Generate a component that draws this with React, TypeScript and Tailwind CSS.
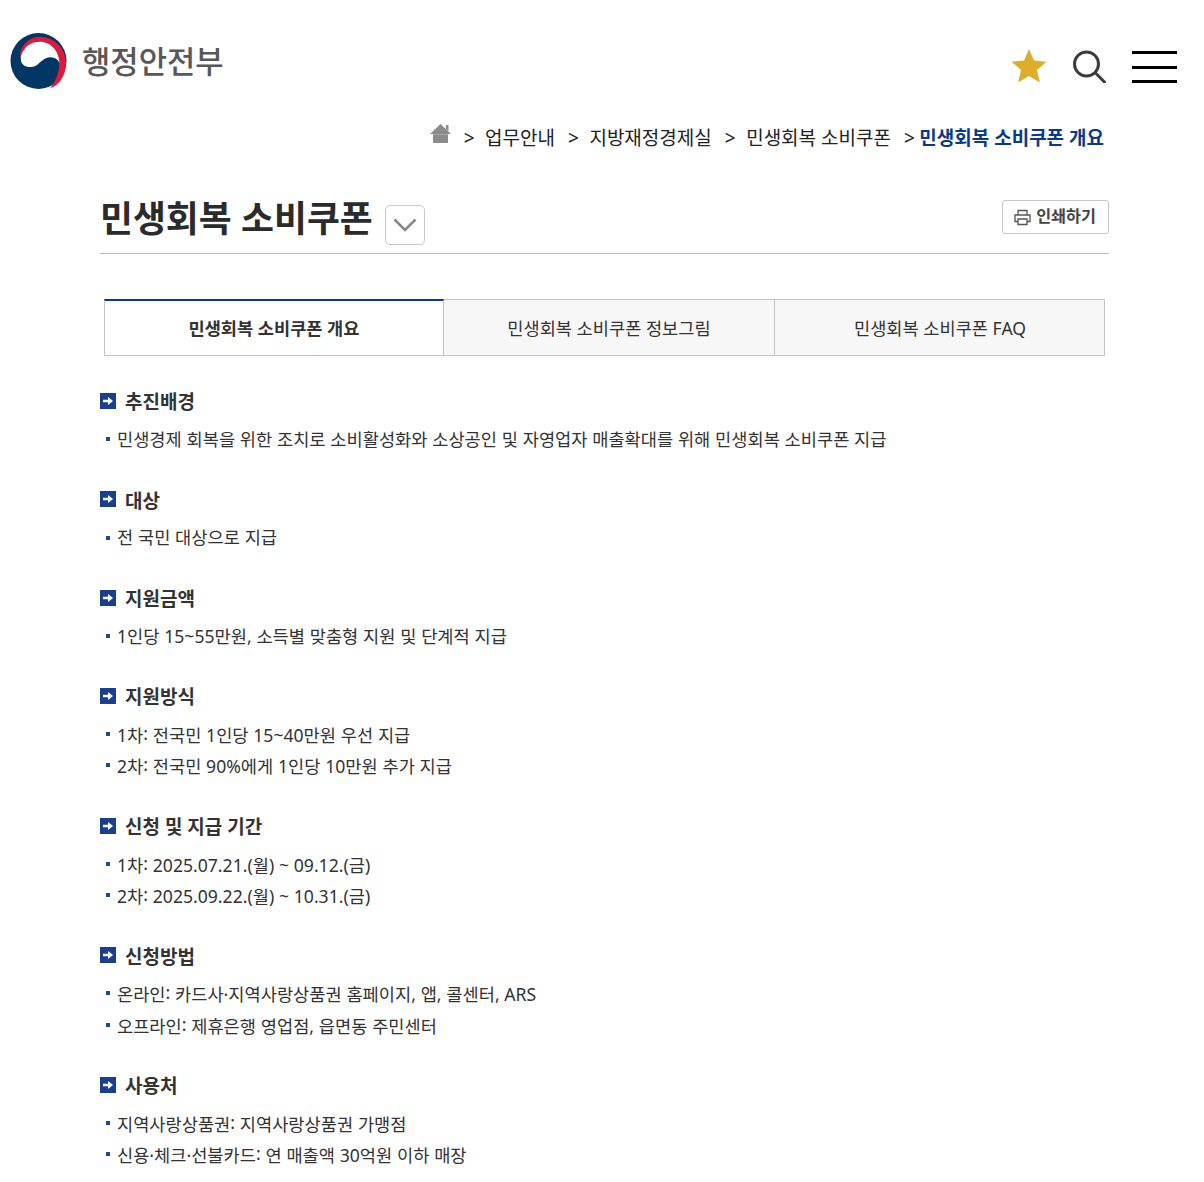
const FONT = '"Noto Sans", "Noto Sans CJK KR", sans-serif';

const sections: { title: string; items: string[] }[] = [
    { title: '추진배경', items: ['민생경제 회복을 위한 조치로 소비활성화와 소상공인 및 자영업자 매출확대를 위해 민생회복 소비쿠폰 지급'] },
    { title: '대상', items: ['전 국민 대상으로 지급'] },
    { title: '지원금액', items: ['1인당 15~55만원, 소득별 맞춤형 지원 및 단계적 지급'] },
    { title: '지원방식', items: ['1차: 전국민 1인당 15~40만원 우선 지급', '2차: 전국민 90%에게 1인당 10만원 추가 지급'] },
    { title: '신청 및 지급 기간', items: ['1차: 2025.07.21.(월) ~ 09.12.(금)', '2차: 2025.09.22.(월) ~ 10.31.(금)'] },
    { title: '신청방법', items: ['온라인: 카드사·지역사랑상품권 홈페이지, 앱, 콜센터, ARS', '오프라인: 제휴은행 영업점, 읍면동 주민센터'] },
    { title: '사용처', items: ['지역사랑상품권: 지역사랑상품권 가맹점', '신용·체크·선불카드: 연 매출액 30억원 이하 매장'] },
];

const crumbs = ['업무안내', '지방재정경제실', '민생회복 소비쿠폰'];

const Logo = () => (
    <svg aria-hidden="true" className="h-[56px] w-[58px]" viewBox="0 0 58 56">
        <circle cx="28.500" cy="28" r="28" fill="#003764" />
        <path d="M10.700 23.700C14 13 21 8.700 30 8.700c11 0 19.300 9.500 19.300 21.500 0 9-4 19-9.300 25.100 9-2.500 16-13 16-25C56 15 44 3.700 30 3.700 20 3.700 12 11 10 20.300Z" fill="#e2173b" />
        <path d="M10.700 23.700C14 13 21 8.700 30 8.700c11 0 19.300 9.500 19.500 22C49 27 44.500 24 40 24.300 34 24.700 31 29 27 32 22 35.500 13 35 11 28Z" fill="#ffffff" />
    </svg>
);

const ArrowBadge = () => (
    <span className="mb-[1px] flex h-[16px] w-[16px] items-center justify-center bg-[#1a3f8f]">
        <svg aria-hidden="true" className="h-[10px] w-[10px]" viewBox="0 0 10 10">
            <path d="M0 3.800h5V1l5 4-5 4V6.200H0Z" fill="#ffffff" />
        </svg>
    </span>
);

// the colon sits higher than the baseline in the original font
const ItemText = ({ text }: { text: string }) => {
    const [head, ...rest] = text.split(':');
    if (rest.length === 0) {
        return <span>{text}</span>;
    }
    return (
        <span>
            {head}
            <span className="align-[2px]">:</span>
            {rest.join(':')}
        </span>
    );
};

export default function App() {
    return (
        <div className="min-h-[1182px] w-[1204px] bg-white text-[#333333]" style={{ fontFamily: FONT }}>
            <header className="flex h-[110px] items-start justify-between pl-[10px] pr-[27px]">
                <div className="mt-[33px] flex items-center gap-[14px]">
                    <Logo />
                    <span className="text-[30.800px] leading-[40px] font-medium text-[#58585a]">행정안전부</span>
                </div>
                <div className="mt-[49px] flex items-start">
                    <svg aria-hidden="true" className="h-[36px] w-[36px]" viewBox="0 0 36 36">
                        <path d="M18 0l5 11.500 12.500 1.200-9.500 8.200 2.900 12.600L18 27 7.100 33.500 10 20.900.5 12.700 13 11.500Z" fill="#dfae28" />
                    </svg>
                    <svg aria-hidden="true" className="ml-[26px] h-[34px] w-[33px]" fill="none" stroke="#3c3c3c" strokeWidth="3" viewBox="0 0 33 34">
                        <circle cx="13.500" cy="15" r="12" />
                        <path d="M22.500 24l9 9" strokeLinecap="round" />
                    </svg>
                    <div className="ml-[26px] mt-[2px] flex h-[32px] w-[45px] flex-col justify-between">
                        <span className="h-[3px] bg-black" />
                        <span className="h-[3px] bg-black" />
                        <span className="h-[3px] bg-black" />
                    </div>
                </div>
            </header>

            <nav className="flex h-[55px] items-start justify-end pr-[100px] text-[19px] leading-[57px] text-[#222222]">
                <svg aria-hidden="true" className="mt-[14px] h-[19px] w-[21px]" fill="#8c8c8c" viewBox="0 0 21 19">
                    <path d="M10.500 0L21 10H0Z" />
                    <path d="M16 1h2.500v6.500L16 5Z" />
                    <path d="M3 10.300h15V18c0 .6-.4 1-1 1H4c-.6 0-1-.4-1-1Z" />
                </svg>
                {crumbs.map((crumb) => (
                    <span key={crumb} className="flex">
                        <span className="ml-[13px] mr-[10.500px]">&gt;</span>
                        {crumb}
                    </span>
                ))}
                <span className="ml-[13px] mr-[4.500px]">&gt;</span>
                <strong className="font-bold text-[#0b3a8a]">민생회복 소비쿠폰 개요</strong>
            </nav>

            <main className="px-[95px]">
                <div className="ml-[5px] flex h-[89px] w-[1009px] items-start justify-between border-b border-[#bbbbbb]">
                    <div className="mt-[25px] flex items-start">
                        <h1 className="text-[35.800px] leading-[56px] font-bold text-[#2b2b2b]">민생회복 소비쿠폰</h1>
                        <button type="button" className="ml-[12px] mt-[15px] flex h-[40px] w-[40px] items-center justify-center rounded-[5px] border border-[#c8c8c8]">
                            <svg aria-hidden="true" className="h-[14px] w-[24px]" fill="none" stroke="#888888" strokeWidth="2.500" viewBox="0 0 24 14">
                                <path d="M1.500 1.500l10.500 10.500 10.500-10.500" />
                            </svg>
                        </button>
                    </div>
                    <button type="button" className="mt-[35px] flex h-[34px] w-[107px] items-center justify-center gap-[5px] rounded-[3px] border border-[#c8c8c8] pb-[2px] pr-[1px] text-[16.200px] font-bold text-[#444444]">
                        <svg aria-hidden="true" className="mt-[2px] h-[17px] w-[17px]" fill="none" stroke="#555555" strokeWidth="1.300" viewBox="0 0 17 17">
                            <path d="M4 6V1.500h9V6M4 12.500H1V6h15v6.500h-3M4 10h9v5.500H4Z" />
                        </svg>
                        인쇄하기
                    </button>
                </div>

                <div className="ml-[9px] mt-[45px] flex h-[57px] w-[1001px] text-[17.600px] text-[#333333]">
                    <div className="flex w-[340px] items-center justify-center border-x border-b border-t-2 border-x-[#c4c4c4] border-b-[#c4c4c4] border-t-[#0b3a8a] bg-white font-bold">
                        민생회복 소비쿠폰 개요
                    </div>
                    <div className="flex w-[331px] items-center justify-center border-y border-r border-[#c4c4c4] bg-[#f7f7f7] pt-px">
                        민생회복 소비쿠폰 정보그림
                    </div>
                    <div className="flex w-[330px] items-center justify-center border-y border-r border-[#c4c4c4] bg-[#f7f7f7] pl-px pt-px">
                        민생회복 소비쿠폰 FAQ
                    </div>
                </div>

                <div className="mt-[27.600px] flex flex-col gap-[27.030px] pl-[5px]">
                    {sections.map((section) => (
                        <section key={section.title}>
                            <h2 className="flex h-[36px] items-center gap-[9px] text-[19px] font-bold text-[#333333]">
                                <ArrowBadge />
                                <span className="mt-[2px]">{section.title}</span>
                            </h2>
                            <ul className="mt-[4px]">
                                {section.items.map((item) => (
                                    <li key={item} className="flex h-[31.300px] items-center gap-[7px] pl-[6px] text-[17.600px] [word-spacing:0.2px] text-[#333333]">
                                        <span className="h-[4px] w-[4px] shrink-0 bg-[#1a4a9a]" />
                                        <ItemText text={item} />
                                    </li>
                                ))}
                            </ul>
                        </section>
                    ))}
                </div>
            </main>
        </div>
    );
}
